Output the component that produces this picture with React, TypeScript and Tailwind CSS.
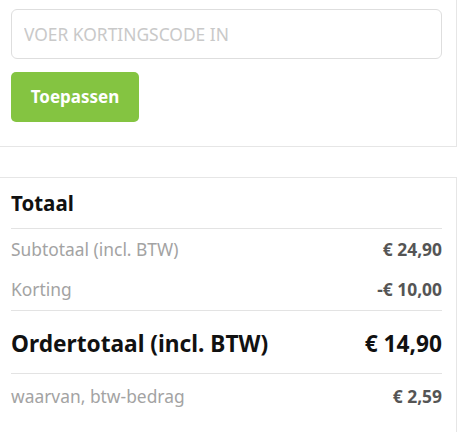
export default function App() {
  const font = { fontFamily: '"Noto Sans", "Open Sans", sans-serif' }

  return (
    <div className="w-[475px] h-[432px] overflow-hidden bg-white" style={font}>
      {/* Kortingscode card */}
      <div className="-ml-[4px] w-[461px] -mt-[4px] border-[1.5px] border-[#e6e6e6] bg-white px-[14px] pt-[12px] pb-[24px]">
        <input
          type="text"
          placeholder="VOER KORTINGSCODE IN"
          className="block w-full h-[50px] rounded-[6px] border border-[#dedede] px-[12px] text-[17.4px] text-[#333] placeholder:text-[#c9c9c9] outline-none"
        />
        <button className="mt-[13px] h-[50px] w-[128px] rounded-[5px] bg-[#84c441] text-[17px] font-bold text-white">
          Toepassen
        </button>
      </div>

      {/* Totaal card */}
      <div className="-ml-[4px] mt-[30px] w-[461px] border-[1.5px] border-b-0 border-[#e6e6e6] bg-white px-[14px] pb-[20px]">
        <div className="flex h-[51px] items-center border-b border-[#e3e3e3] pt-[1px] text-[20.5px] font-bold text-[#111]">
          Totaal
        </div>
        <div className="flex h-[40px] items-center justify-between text-[17.4px]">
          <span className="text-[#a3a3a3]">Subtotaal (incl. BTW)</span>
          <span className="font-bold text-[#555]">€ 24,90</span>
        </div>
        <div className="flex h-[42px] items-center justify-between border-b border-[#e3e3e3] text-[17.4px]">
          <span className="text-[#a3a3a3]">Korting</span>
          <span className="font-bold text-[#555]">-€ 10,00</span>
        </div>
        <div className="flex h-[63px] items-center justify-between border-b border-[#e3e3e3] pt-[5px] text-[22.7px] font-bold text-[#111]">
          <span>Ordertotaal (incl. BTW)</span>
          <span>€ 14,90</span>
        </div>
        <div className="flex h-[44px] items-center justify-between text-[17.4px]">
          <span className="text-[#a3a3a3]">waarvan, btw-bedrag</span>
          <span className="font-bold text-[#555]">€ 2,59</span>
        </div>
      </div>
    </div>
  )
}
